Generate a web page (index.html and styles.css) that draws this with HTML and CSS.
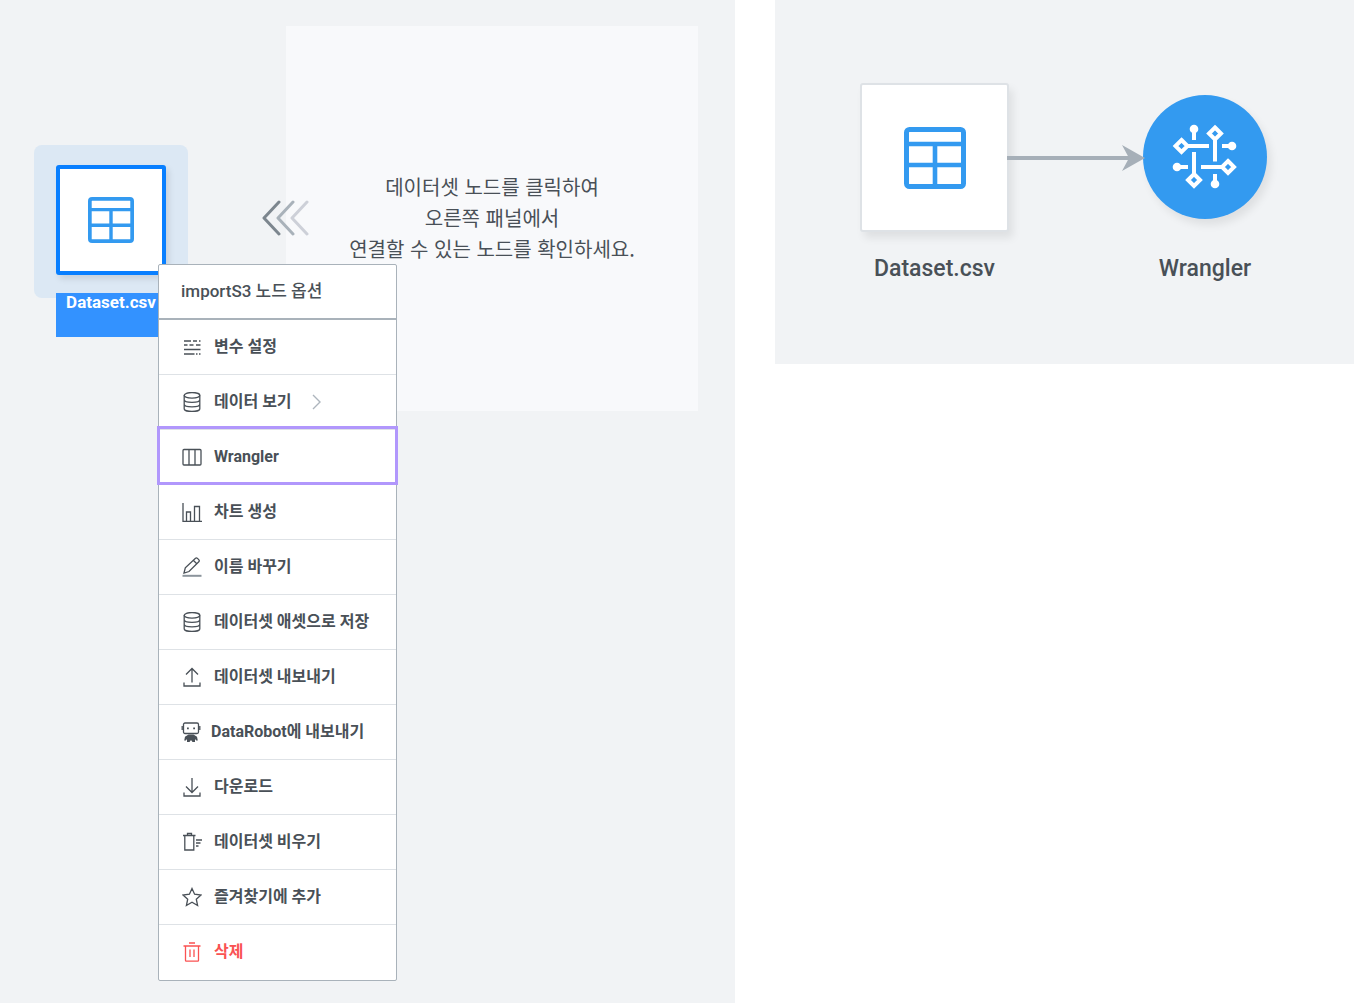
FILE: index.html
```html
<!DOCTYPE html>
<html lang="ko">
<head>
<meta charset="utf-8">
<meta name="viewport" content="width=device-width, initial-scale=1">
<title>Dataset.csv</title>
<link rel="stylesheet" href="styles.css">
</head>
<body>
<svg class="symbols" aria-hidden="true">
  <symbol id="table" viewBox="0 0 62 62">
    <rect x="2.5" y="2.5" width="57" height="57" rx="3" fill="none" stroke="currentColor" stroke-width="5"/>
    <path d="M3 17h56M3 38h56M31 17v42" fill="none" stroke="currentColor" stroke-width="4.6"/>
  </symbol>
  <symbol id="database" viewBox="0 0 20 20">
    <ellipse cx="10" cy="3.3" rx="7.8" ry="2.8"/>
    <path d="M2.2 3.3v13.4c0 1.500 3.500 2.800 7.800 2.800s7.800-1.300 7.800-2.800V3.300M2.200 7.800c0 1.500 3.500 2.600 7.800 2.600s7.800-1.100 7.800-2.600M2.200 12.300c0 1.500 3.500 2.600 7.800 2.600s7.800-1.100 7.800-2.600"/>
  </symbol>
</svg>
<main class="page">
  <section class="canvas canvas-main">
    <p class="hint">데이터셋 노드를 클릭하여<br>오른쪽 패널에서<br>연결할 수 있는 노드를 확인하세요.</p>
    <svg class="chevrons" viewBox="0 0 48 36" aria-hidden="true">
      <path d="M45 2 30 18l15 16" stroke="#cdd0d8"/>
      <path d="M31 2 16 18l15 16" stroke="#a9b2ba"/>
      <path d="M17 2 2 18l15 16" stroke="#7c868e"/>
    </svg>
    <div class="node node-selected">
      <span class="halo"></span>
      <div class="tile"><svg class="tile-icon"><use href="#table"/></svg></div>
      <div class="node-label">Dataset.csv</div>
    </div>
    <nav class="menu" aria-label="importS3 노드 옵션">
      <h2 class="menu-title">importS3 노드 옵션</h2>
      <ul class="menu-list">
        <li><button class="item"><svg class="icon" viewBox="0 0 20 20"><path d="M2 4h7M11 4h4M17 4h1.500M2 8h3.500M7.500 8h4M14 8h4.500M2 12.500h16.500M2 17h10.500M14 17h1.500M17 17h1.500"/></svg>변수 설정</button></li>
        <li><button class="item"><svg class="icon"><use href="#database"/></svg>데이터 보기<svg class="more" viewBox="0 0 9 16"><path d="m1 1 7 7-7 7"/></svg></button></li>
        <li><button class="item item-current"><svg class="icon" viewBox="0 0 20 20"><rect x="1" y="2.500" width="18" height="15.500" rx="1"/><path d="M7 2.500V18M13 2.500V18"/></svg>Wrangler</button></li>
        <li><button class="item"><svg class="icon" viewBox="0 0 20 20"><path d="M1 1v18.500h19M4.500 19v-9h4v9M12.500 19V4.500h5V19"/></svg>차트 생성</button></li>
        <li><button class="item"><svg class="icon" viewBox="0 0 20 20"><path d="m2 16 1.300-5.200L13.500 1.200q1-.7 2 .2l1.400 1.500q.8 1-.1 1.900L7 14.500ZM11.300 3.300l3.700 3.700"/><path d="M.5 18.800h19" stroke="#8b949c" stroke-width="2"/></svg>이름 바꾸기</button></li>
        <li><button class="item"><svg class="icon"><use href="#database"/></svg>데이터셋 애셋으로 저장</button></li>
        <li><button class="item"><svg class="icon" viewBox="0 0 20 20"><path d="M10 15.500V1.500M4 7.500l6-6 6 6M2 15.500v3.500h16v-3.500"/></svg>데이터셋 내보내기</button></li>
        <li><button class="item item-robot"><svg class="icon" viewBox="0 0 20 20"><rect x="2.500" y="1" width="15" height="10.500" rx="1.500"/><path d="M1.200 4v4M18.800 4v4"/><path d="M6 5.500h1.800v1.800H6zM12.200 5.500H14v1.800h-1.800zM7.500 12.500h5l3.500 2.300.8 3.700h-1.600l-1.200-1.500v3h-2.500L10 18l-1.500 2H6v-3l-1.200 1.500H3.200l.8-3.700z" fill="currentColor" stroke="none"/></svg>DataRobot에 내보내기</button></li>
        <li><button class="item"><svg class="icon" viewBox="0 0 20 20"><path d="M10 1v14M4 9.500l6 6 6-6M2 15.500v3.500h16v-3.500"/></svg>다운로드</button></li>
        <li><button class="item"><svg class="icon" viewBox="0 0 20 20"><path d="M1 3.500h12.500M5.500 3V1.500h4V3M2.800 3.500v14.500h9V3.500M14 8h6M14 11h4.500M14 14h2.500"/></svg>데이터셋 비우기</button></li>
        <li><button class="item"><svg class="icon" viewBox="0 0 20 20"><path d="m10 1.500 2.600 5.700 6.400.8-4.700 4.200 1.300 6.300-5.600-3.200-5.600 3.200 1.300-6.300L1 8l6.400-.8Z"/></svg>즐겨찾기에 추가</button></li>
        <li><button class="item item-danger"><svg class="icon" viewBox="0 0 20 20"><path d="M1.500 4h17M7 1h6M3.500 4v14.500q0 .7.700.7h11.600q.7 0 .7-.7V4M8 7.500v7.500M12 7.500v7.500"/></svg>삭제</button></li>
      </ul>
    </nav>
  </section>
  <section class="canvas canvas-result">
    <div class="node node-dataset">
      <div class="tile"><svg class="tile-icon"><use href="#table"/></svg></div>
      <div class="node-label">Dataset.csv</div>
    </div>
    <div class="node node-wrangler">
      <div class="disc">
        <svg class="disc-icon" viewBox="0 0 64 64" fill="none" stroke="#fff" stroke-width="4">
          <path d="M13 21h23M42 8v28.500M51 42H28M21 56V27"/>
          <path d="M21 5v10M59 21H49M42 59V49M5 42h10"/>
          <g fill="#339af0"><path d="m8.500 15 6 6-6 6-6-6zM42 2.500l6 6-6 6-6-6zM55 36l6 6-6 6-6-6zM21 49l6 6-6 6-6-6z"/></g>
          <g fill="#fff" stroke="none"><circle cx="21" cy="4" r="4.300"/><circle cx="59" cy="21" r="4.300"/><circle cx="42" cy="59" r="4.300"/><circle cx="4" cy="42" r="4.300"/></g>
        </svg>
      </div>
      <div class="node-label">Wrangler</div>
    </div>
    <svg class="link" viewBox="0 0 138 26" aria-hidden="true"><path d="M0 13h122" stroke="#a6afb8" stroke-width="4"/><path d="m115 0 23 13-23 13 7-13z" fill="#a6afb8"/></svg>
  </section>
</main>
</body>
</html>
```
FILE: styles.css
```css
* { box-sizing: border-box; }
body {
  margin: 0;
  background: #fff;
  color: #495057;
  font-family: Roboto, "Noto Sans CJK KR", sans-serif;
}
.symbols { position: absolute; width: 0; height: 0; }
.page {
  display: grid;
  grid-template-columns: 735fr 579fr;
  column-gap: 40px;
  align-items: start;
  min-height: 100vh;
}
.canvas { position: relative; background: #f1f3f5; }
.canvas-main {
  min-height: 100vh;
  padding: 26px 37px 22px 158px;
}
.canvas-result { min-height: 364px; }

.hint {
  position: absolute;
  top: 26px;
  left: 286px;
  right: 37px;
  height: 385px;
  margin: 0;
  padding-bottom: 2px;
  display: grid;
  place-content: center;
  background: #f8f9fb;
  font-family: "Noto Sans CJK KR", sans-serif;
  font-size: 20px;
  line-height: 31px;
  text-align: center;
}
.chevrons {
  position: absolute;
  top: 200px;
  left: 262px;
  width: 48px;
  height: 36px;
  fill: none;
  stroke-width: 3;
  stroke-linecap: round;
  stroke-linejoin: round;
}

.node {
  position: absolute;
  display: flex;
  flex-direction: column;
  align-items: center;
}
.tile {
  display: grid;
  place-items: center;
  background: #fff;
  color: #339af0;
}
.node-label { font-weight: 500; white-space: nowrap; }

.node-selected { top: 165px; left: 56px; width: 110px; }
.halo {
  position: absolute;
  inset: -20px -22px auto;
  height: 153px;
  border-radius: 8px;
  background: #dce8f4;
}
.node-selected .tile {
  position: relative;
  width: 110px;
  height: 110px;
  border: 4px solid #087fff;
  border-radius: 3px;
  box-shadow: 3px 4px 6px rgba(0, 0, 0, .1);
}
.node-selected .tile-icon { width: 46px; height: 46px; }
.node-selected .node-label {
  position: relative;
  width: 110px;
  height: 44px;
  margin-top: 18px;
  background: #3392ff;
  color: #fff;
  font-size: 17px;
  font-weight: 700;
  line-height: 18px;
  text-align: center;
}

.menu {
  position: relative;
  width: 239px;
  margin-top: 238px;
  border: 1px solid #a9b2ba;
  border-radius: 2px;
  background: #fff;
}
.menu-title {
  height: 55px;
  margin: 0;
  padding-left: 22px;
  border-bottom: 2px solid #a9b2ba;
  font-size: 17px;
  font-weight: 500;
  line-height: 52px;
}
.menu-list { margin: 0; padding: 0; list-style: none; }
.item {
  position: relative;
  display: flex;
  align-items: center;
  gap: 12px;
  width: 100%;
  height: 55px;
  padding: 0 0 0 23px;
  border: 0;
  border-bottom: 1px solid #dee2e6;
  background: transparent;
  color: inherit;
  font: 700 16px/54px Roboto, "Noto Sans CJK KR", sans-serif;
  text-align: left;
  white-space: nowrap;
}
li:last-child .item { border-bottom-color: transparent; }
.item-current::after {
  content: "";
  position: absolute;
  inset: -4px -2px -1px;
  border: 3px solid #b197fc;
}
.item-robot { gap: 10px; padding-left: 22px; }
.item-danger { color: #fa5252; }
.icon {
  width: 20px;
  height: 20px;
  fill: none;
  stroke: currentColor;
  stroke-width: 1.3;
}
.more {
  width: 9px;
  height: 16px;
  margin-left: 8px;
  fill: none;
  stroke: #adb5bd;
  stroke-width: 1.4;
}

.node-dataset { top: 83px; left: 85px; width: 149px; }
.node-dataset .tile {
  width: 149px;
  height: 149px;
  border: 2px solid #dee2e6;
  border-radius: 3px;
  box-shadow: 4px 6px 8px rgba(0, 0, 0, .08);
}
.node-dataset .tile-icon { width: 62px; height: 62px; }
.canvas-result .node-label { font-size: 23px; line-height: 28px; }
.node-dataset .node-label { margin-top: 23px; }
.node-wrangler { top: 95px; left: 368px; width: 124px; }
.disc {
  display: grid;
  place-items: center;
  width: 124px;
  height: 124px;
  border-radius: 50%;
  background: #339af0;
  box-shadow: 4px 6px 8px rgba(0, 0, 0, .08);
}
.disc-icon { width: 64px; height: 64px; overflow: visible; }
.node-wrangler .node-label { margin-top: 36px; }
.link { position: absolute; top: 145px; left: 232px; width: 138px; height: 26px; }
```
